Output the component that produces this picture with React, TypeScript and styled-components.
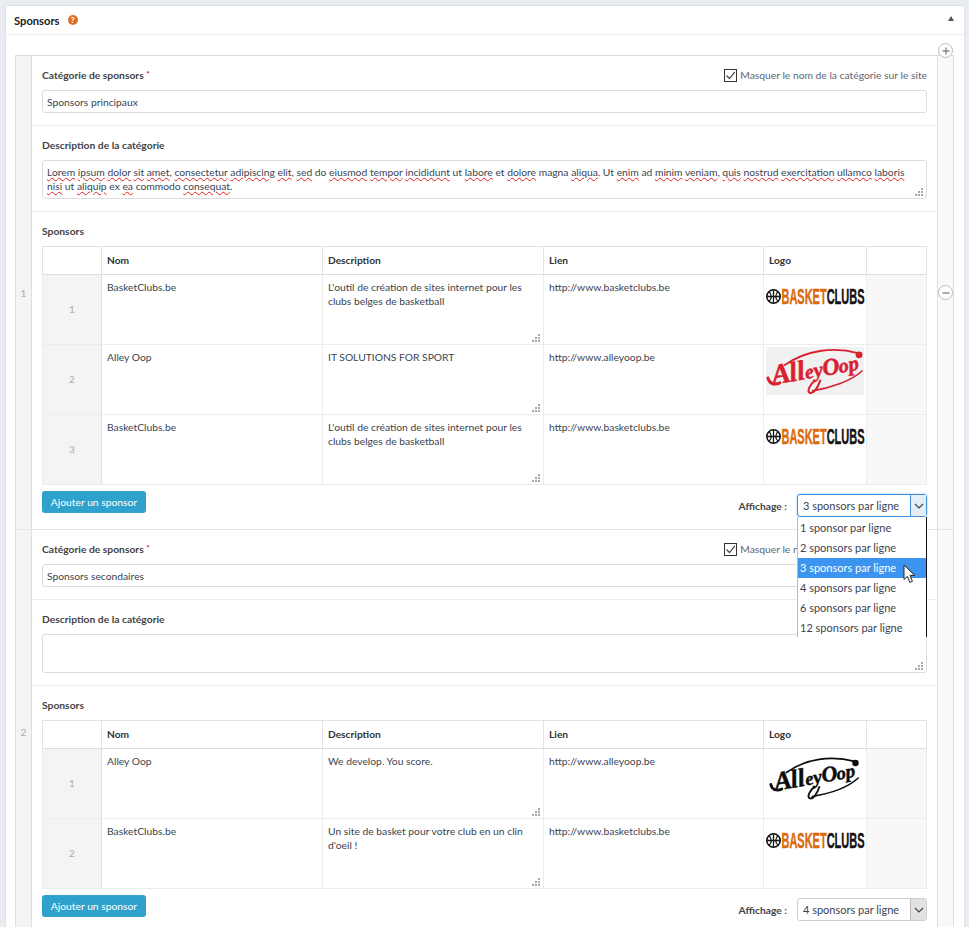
import React from 'react';
import styled, { createGlobalStyle } from 'styled-components';

type Sponsor = {
    name: string;
    description: string;
    link: string;
    logo: 'basket' | 'alleyRed' | 'alleyBlack';
};

type Category = {
    title: string;
    description?: React.ReactNode;
    rows: Sponsor[];
    display: string;
    open?: boolean;
};

const OUTIL = "L'outil de création de sites internet pour les clubs belges de basketball";

const Wavy = styled.span`
    text-decoration: underline wavy #e02020 1px;
    text-underline-offset: 1px;
`;

const lorem = (
    <>
        <Wavy>Lorem</Wavy> <Wavy>ipsum</Wavy> <Wavy>dolor</Wavy> <Wavy>sit</Wavy> <Wavy>amet</Wavy>,{' '}
        <Wavy>consectetur</Wavy> <Wavy>adipiscing</Wavy> <Wavy>elit</Wavy>, <Wavy>sed</Wavy> do{' '}
        <Wavy>eiusmod</Wavy> <Wavy>tempor</Wavy> <Wavy>incididunt</Wavy> ut <Wavy>labore</Wavy> et{' '}
        <Wavy>dolore</Wavy> magna <Wavy>aliqua</Wavy>. Ut <Wavy>enim</Wavy> ad <Wavy>minim</Wavy>{' '}
        <Wavy>veniam</Wavy>, <Wavy>quis</Wavy> <Wavy>nostrud</Wavy> <Wavy>exercitation</Wavy>{' '}
        <Wavy>ullamco</Wavy> <Wavy>laboris</Wavy> <Wavy>nisi</Wavy> ut <Wavy>aliquip</Wavy> ex{' '}
        <Wavy>ea</Wavy> commodo <Wavy>consequat</Wavy>.
    </>
);

const categories: Category[] = [
    {
        title: 'Sponsors principaux',
        description: lorem,
        display: '3 sponsors par ligne',
        open: true,
        rows: [
            { name: 'BasketClubs.be', description: OUTIL, link: 'http://www.basketclubs.be', logo: 'basket' },
            { name: 'Alley Oop', description: 'IT SOLUTIONS FOR SPORT', link: 'http://www.alleyoop.be', logo: 'alleyRed' },
            { name: 'BasketClubs.be', description: OUTIL, link: 'http://www.basketclubs.be', logo: 'basket' },
        ],
    },
    {
        title: 'Sponsors secondaires',
        display: '4 sponsors par ligne',
        rows: [
            { name: 'Alley Oop', description: 'We develop. You score.', link: 'http://www.alleyoop.be', logo: 'alleyBlack' },
            {
                name: 'BasketClubs.be',
                description: "Un site de basket pour votre club en un clin d'oeil !",
                link: 'http://www.basketclubs.be',
                logo: 'basket',
            },
        ],
    },
];

const menuOptions = [
    '1 sponsor par ligne',
    '2 sponsors par ligne',
    '3 sponsors par ligne',
    '4 sponsors par ligne',
    '6 sponsors par ligne',
    '12 sponsors par ligne',
];

function Grip() {
    return (
        <GripIcon width="9" height="9" viewBox="0 0 9 9">
            <g fill="#a8a8a8">
                <rect x="6" y="0" width="2" height="2" />
                <rect x="3" y="3" width="2" height="2" />
                <rect x="6" y="3" width="2" height="2" />
                <rect x="0" y="6" width="2" height="2" />
                <rect x="3" y="6" width="2" height="2" />
                <rect x="6" y="6" width="2" height="2" />
            </g>
        </GripIcon>
    );
}

function BasketLogo() {
    return (
        <svg width="100" height="18" viewBox="0 0 100 18">
            <g fill="none" stroke="#161616">
                <circle cx="7.5" cy="8.5" r="6.7" strokeWidth="1.6" />
                <path
                    d="M7.5 2V15M1 8.5H14M3 3.8C6 6 6 11 3 13.2M12 3.8C9 6 9 11 12 13.2"
                    strokeWidth="1.3"
                />
            </g>
            <Wordmark x="15.5" y="9.4" fontSize="13" textLength="83" lengthAdjust="spacingAndGlyphs" transform="scale(1 1.7)">
                <tspan fill="#dc6a0c" stroke="#dc6a0c" strokeWidth="0.25">BASKET</tspan>
                <tspan fill="#141414" stroke="#141414" strokeWidth="0.25">CLUBS</tspan>
            </Wordmark>
        </svg>
    );
}

function AlleyLogo({ color, width, height }: { color: string; width: number; height: number }) {
    return (
        <svg width={width} height={height} viewBox="0 0 100 48">
            <path d="M19 18C40 3 68 -1 93 6" fill="none" stroke={color} strokeWidth="1.9" strokeLinecap="round" />
            <circle cx="94" cy="7.7" r="3.5" fill={color} />
            <path d="M47 44C66 41 86 34 97 24" fill="none" stroke={color} strokeWidth="1.7" strokeLinecap="round" />
            <path d="M50 33C45 37 41 44 44 46C48 47.5 52 42 55 33" fill="none" stroke={color} strokeWidth="2" />
            <path d="M2 31C3 36 8 39 14 36" fill="none" stroke={color} strokeWidth="3" strokeLinecap="round" />
            <ScriptMark x="7" y="38" fill={color} stroke={color} strokeWidth="0.5" transform="rotate(-10 7 38)">
                <tspan fontSize="29">A</tspan>
                <tspan fontSize="28" dx="-1">ll</tspan>
                <tspan fontSize="20">e</tspan>
                <tspan fontSize="21">y</tspan>
                <tspan fontSize="24">O</tspan>
                <tspan fontSize="20" dx="-1">o</tspan>
                <tspan fontSize="21">p</tspan>
            </ScriptMark>
        </svg>
    );
}

function Logo({ kind }: { kind: Sponsor['logo'] }) {
    if (kind === 'basket') return <BasketBox><BasketLogo /></BasketBox>;
    if (kind === 'alleyRed') return <AlleyBox $bg="#f1f1f1"><AlleyLogo color="#d9202f" width={99} height={48} /></AlleyBox>;
    return <AlleyBox $inset><AlleyLogo color="#0c0c0c" width={92} height={46} /></AlleyBox>;
}

function DisplayMenu() {
    return (
        <Menu>
            {menuOptions.map((option) => (
                <MenuItem key={option} $active={option === '3 sponsors par ligne'}>
                    {option}
                </MenuItem>
            ))}
            <Pointer width="14" height="20" viewBox="0 0 14 20">
                <path
                    d="M1 1V15.5L4.4 12.4L6.8 18.4L9.4 17.3L7 11.4H11.8Z"
                    fill="#fff"
                    stroke="#222"
                    strokeWidth="1"
                    strokeLinejoin="round"
                />
            </Pointer>
        </Menu>
    );
}

function SponsorTable({ rows }: { rows: Sponsor[] }) {
    return (
        <Table>
            <colgroup>
                <col width="59" />
                <col width="221" />
                <col width="221" />
                <col width="220" />
                <col width="103" />
                <col />
            </colgroup>
            <thead>
                <tr>
                    <HeadCell />
                    <HeadCell>Nom</HeadCell>
                    <HeadCell>Description</HeadCell>
                    <HeadCell>Lien</HeadCell>
                    <HeadCell>Logo</HeadCell>
                    <HeadCell />
                </tr>
            </thead>
            <tbody>
                {rows.map((row, index) => (
                    <tr key={index}>
                        <OrderCell>{index + 1}</OrderCell>
                        <Cell>{row.name}</Cell>
                        <Cell>
                            {row.description}
                            <Grip />
                        </Cell>
                        <Cell>{row.link}</Cell>
                        <LogoCell>
                            <Logo kind={row.logo} />
                        </LogoCell>
                        <RemoveCell />
                    </tr>
                ))}
            </tbody>
        </Table>
    );
}

function CategoryRow({ category, index }: { category: Category; index: number }) {
    return (
        <Row>
            <RowNumber>{index + 1}</RowNumber>
            <RowBody>
                <Field $height={70}>
                    <LabelLine>
                        <Label>
                            Catégorie de sponsors <Required>*</Required>
                        </Label>
                        <CheckLabel>
                            <CheckBox>
                                <svg width="11" height="11" viewBox="0 0 11 11">
                                    <path d="M1.5 5.5L4.5 8.5L9.8 1.8" fill="none" stroke="#444" strokeWidth="1.2" />
                                </svg>
                            </CheckBox>
                            Masquer le nom de la catégorie sur le site
                        </CheckLabel>
                    </LabelLine>
                    <TextInput readOnly value={category.title} />
                </Field>
                <Field $height={86}>
                    <LabelLine>
                        <Label>Description de la catégorie</Label>
                    </LabelLine>
                    <TextArea>
                        {category.description}
                        <Grip />
                    </TextArea>
                </Field>
                <TableField>
                    <LabelLine>
                        <Label>Sponsors</Label>
                    </LabelLine>
                    <SponsorTable rows={category.rows} />
                    <Footer>
                        <AddButton>Ajouter un sponsor</AddButton>
                        <DisplayGroup>
                            <DisplayLabel>Affichage :</DisplayLabel>
                            <Select $open={category.open}>
                                <SelectValue>{category.display}</SelectValue>
                                <SelectArrow $open={category.open}>
                                    <svg width="10" height="6" viewBox="0 0 10 6">
                                        <path d="M1 1L5 5L9 1" fill="none" stroke="#444" strokeWidth="1.2" />
                                    </svg>
                                </SelectArrow>
                                {category.open && <DisplayMenu />}
                            </Select>
                        </DisplayGroup>
                    </Footer>
                </TableField>
            </RowBody>
            <RowSide>
                {index === 0 && (
                    <RoundButton $top={-13}>
                        <svg width="8" height="8" viewBox="0 0 8 8">
                            <path d="M4 0.5V7.5M0.5 4H7.5" stroke="#888" strokeWidth="1.4" />
                        </svg>
                    </RoundButton>
                )}
                {index === 0 && (
                    <RoundButton $top={229}>
                        <svg width="8" height="8" viewBox="0 0 8 8">
                            <path d="M0.5 4H7.5" stroke="#888" strokeWidth="1.4" />
                        </svg>
                    </RoundButton>
                )}
            </RowSide>
        </Row>
    );
}

export default function App() {
    return (
        <Page>
            <GlobalStyle />
            <Panel>
                <PanelHeader>
                    <PanelTitle>Sponsors</PanelTitle>
                    <HelpIcon>?</HelpIcon>
                    <Collapse />
                </PanelHeader>
                <PanelBody>
                    <Repeater>
                        {categories.map((category, index) => (
                            <CategoryRow key={category.title} category={category} index={index} />
                        ))}
                    </Repeater>
                </PanelBody>
            </Panel>
        </Page>
    );
}

const GlobalStyle = createGlobalStyle`
    html, body {
        margin: 0;
        height: 100%;
        overflow: hidden;
        background: #e9edf2;
    }
    * {
        box-sizing: border-box;
    }
`;

const Page = styled.div`
    height: 927px;
    overflow: hidden;
    padding: 5px 4px 0 5px;
    font-family: Lato, 'Open Sans', sans-serif;
    font-size: 10.3px;
    color: #3c4450;
`;

const Panel = styled.section`
    background: #fff;
    border: 1px solid #dfe2e6;
    border-radius: 3px 3px 0 0;
    height: 1000px;
`;

const PanelHeader = styled.header`
    height: 29px;
    border-bottom: 1px solid #eceef0;
    display: flex;
    align-items: center;
    padding: 0 10px 0 8px;
`;

const PanelTitle = styled.h2`
    margin: 0;
    font-size: 11.2px;
    font-weight: 700;
    color: #222;
`;

const HelpIcon = styled.span`
    width: 10px;
    height: 10px;
    margin-left: 8px;
    border-radius: 50%;
    background: #dd6f27;
    color: #fff;
    font-size: 8px;
    font-weight: 900;
    line-height: 10px;
    text-align: center;
`;

const Collapse = styled.span`
    margin-left: auto;
    margin-top: -3px;
    width: 0;
    height: 0;
    border-left: 3.5px solid transparent;
    border-right: 3.5px solid transparent;
    border-bottom: 5px solid #555;
`;

const PanelBody = styled.div`
    padding: 20px 10px 0 9px;
`;

const Repeater = styled.div`
    border-top: 1px solid #dedede;
    border-left: 1px solid #dedede;
`;

const Row = styled.div`
    display: flex;
    border-bottom: 1px solid #e4e4e4;
`;

const RowNumber = styled.div`
    width: 16px;
    flex: none;
    background: #f4f4f4;
    border-right: 1px solid #dedede;
    color: #aaa;
    display: flex;
    align-items: center;
    justify-content: center;
    font-size: 10px;
`;

const RowBody = styled.div`
    width: 905px;
    flex: none;
    background: #fff;
`;

const RowSide = styled.div`
    position: relative;
    width: 17px;
    flex: none;
    background: #f9f9f9;
    border-left: 1px solid #dedede;
    border-right: 1px solid #dedede;
`;

const RoundButton = styled.span<{ $top: number }>`
    position: absolute;
    left: 0;
    top: ${(props) => props.$top}px;
    width: 15px;
    height: 15px;
    border: 1px solid #bdbdbd;
    border-radius: 50%;
    background: #fff;
    display: flex;
    align-items: center;
    justify-content: center;
`;

const Field = styled.div<{ $height: number }>`
    height: ${(props) => props.$height}px;
    padding: 0 10px;
    border-bottom: 1px solid #ececec;
`;

const TableField = styled.div`
    padding: 0 10px 16px;
`;

const LabelLine = styled.div`
    height: 34px;
    padding-top: 4px;
    display: flex;
    align-items: center;
    justify-content: space-between;
`;

const Label = styled.label`
    font-weight: 700;
    color: #444;
`;

const Required = styled.sup`
    color: #e01010;
    font-size: 8px;
    line-height: 0;
    vertical-align: 2px;
`;

const CheckLabel = styled.span`
    display: flex;
    align-items: center;
    gap: 3px;
    color: #5f6670;
`;

const CheckBox = styled.span`
    width: 13px;
    height: 13px;
    border: 1px solid #333;
    display: flex;
    align-items: center;
    justify-content: center;
`;

const TextInput = styled.input`
    display: block;
    width: 100%;
    height: 23px;
    padding: 0 4px;
    border: 1px solid #dcdcdc;
    border-radius: 3px;
    font: inherit;
    color: #3c4450;
    outline: none;
`;

const TextArea = styled.div`
    position: relative;
    height: 39px;
    padding: 4px 4px;
    border: 1px solid #dcdcdc;
    border-radius: 3px;
    line-height: 14px;
`;

const GripIcon = styled.svg`
    position: absolute;
    right: 2px;
    bottom: 1px;
`;

const Table = styled.table`
    width: 100%;
    table-layout: fixed;
    border-collapse: collapse;
    border: 1px solid #dedede;
`;

const HeadCell = styled.th`
    height: 28px;
    padding: 0 5px 1px;
    border: 1px solid #e2e2e2;
    border-bottom-color: #dedede;
    text-align: left;
    font-size: 10.2px;
    font-weight: 700;
    color: #333;
`;

const Cell = styled.td`
    position: relative;
    height: 70px;
    padding: 5px 5px;
    border: 1px solid #ececec;
    border-left-color: #e4e4e4;
    vertical-align: top;
    line-height: 14px;
`;

const OrderCell = styled.td`
    background: #f4f4f4;
    border: 1px solid #ececec;
    border-right-color: #dedede;
    padding-bottom: 2px;
    text-align: center;
    color: #aaa;
    font-size: 10px;
`;

const LogoCell = styled(Cell)`
    padding: 0 2px;
`;

const RemoveCell = styled.td`
    background: #f8f8f8;
    border: 1px solid #ececec;
    border-left-color: #dedede;
`;

const BasketBox = styled.div`
    margin-top: 13px;
    line-height: 0;
`;

const AlleyBox = styled.div<{ $bg?: string; $inset?: boolean }>`
    margin: 2px ${(props) => (props.$inset ? '3px' : '0')};
    margin-top: ${(props) => (props.$inset ? '6px' : '2px')};
    line-height: 0;
    background: ${(props) => props.$bg || 'transparent'};
`;

const Wordmark = styled.text`
    font-family: 'Liberation Sans Narrow', 'Liberation Sans', sans-serif;
    font-weight: 700;
`;

const ScriptMark = styled.text`
    font-family: 'Liberation Serif', serif;
    font-style: italic;
    font-weight: 700;
`;

const Footer = styled.div`
    height: 22px;
    display: flex;
    justify-content: space-between;
    align-items: flex-start;
    margin-top: 6px;
`;

const AddButton = styled.button`
    width: 104px;
    height: 22px;
    padding: 0;
    border: 0;
    border-radius: 3px;
    background: #2ea2cc;
    color: #fff;
    font: inherit;
`;

const DisplayGroup = styled.div`
    display: flex;
    align-items: center;
    gap: 10px;
    margin-top: 3px;
`;

const DisplayLabel = styled.span`
    font-weight: 700;
    color: #444;
`;

const Select = styled.div<{ $open?: boolean }>`
    position: relative;
    width: 130px;
    height: 23px;
    display: flex;
    border: 1px solid ${(props) => (props.$open ? '#3f8fd8' : '#cfcfcf')};
    border-radius: 3px;
    box-shadow: ${(props) => (props.$open ? '0 0 2px #7fb8ea' : 'none')};
`;

const SelectValue = styled.span`
    flex: 1;
    padding-left: 5px;
    font-size: 11px;
    line-height: 21px;
`;

const SelectArrow = styled.span<{ $open?: boolean }>`
    width: 16px;
    display: flex;
    align-items: center;
    justify-content: center;
    background: ${(props) => (props.$open ? '#e4eef8' : '#e2e2e2')};
    border-left: 1px solid ${(props) => (props.$open ? '#3f8fd8' : '#bbb')};
`;

const Menu = styled.div`
    position: absolute;
    z-index: 5;
    top: 22px;
    left: -1px;
    width: 130px;
    height: 120px;
    overflow: hidden;
    background: #fff;
    border-left: 1px solid #bbb;
    border-right: 1px solid #111;
    padding-top: 1px;
`;

const MenuItem = styled.div<{ $active?: boolean }>`
    height: 20px;
    padding-left: 2px;
    font-size: 11px;
    line-height: 20px;
    color: ${(props) => (props.$active ? '#fff' : '#3c4450')};
    background: ${(props) => (props.$active ? '#3d94f0' : 'transparent')};
`;

const Pointer = styled.svg`
    position: absolute;
    left: 105px;
    top: 47px;
`;
